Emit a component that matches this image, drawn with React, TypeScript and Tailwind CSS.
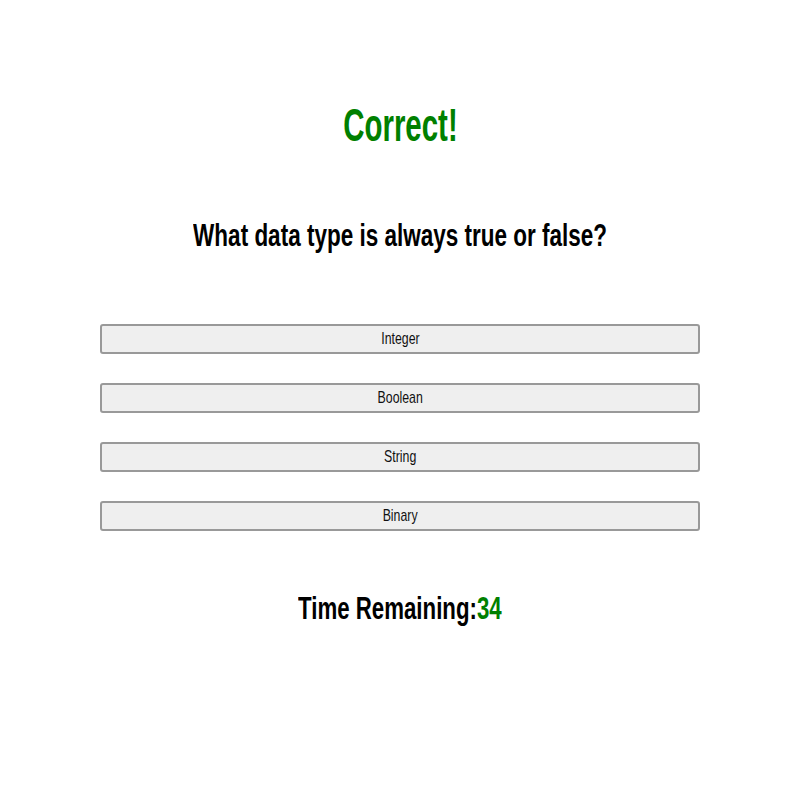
import { useState } from 'react';

const answers = ['Integer', 'Boolean', 'String', 'Binary'];

export default function App() {
  const [timeLeft] = useState(34);

  return (
    <div className="min-h-[800px] bg-white font-['Liberation_Sans',Arial,sans-serif] text-black">
      <div className="w-[600px] mx-auto flex flex-col items-center pt-[98px]">
        {/* Feedback */}
        <h1 className="h-[54px] leading-[54px] text-[46px] font-bold text-[#008000]">
          <span className="inline-block scale-x-[0.64]">Correct!</span>
        </h1>

        {/* Question */}
        <h2 className="mt-[66px] h-[36px] leading-[36px] text-[31px] font-bold whitespace-nowrap">
          <span className="inline-block scale-x-[0.726]">What data type is always true or false?</span>
        </h2>

        {/* Answers */}
        <div className="mt-[70px] w-full flex flex-col gap-[29px]">
          {answers.map((a) => (
            <button
              key={a}
              className="h-[30px] w-full bg-[#efefef] border-2 border-[#999999] rounded-[3px] text-[17px] leading-[26px] text-[#111]"
            >
              <span className="inline-block scale-x-[0.725]">{a}</span>
            </button>
          ))}
        </div>

        {/* Timer */}
        <h2 className="mt-[60px] h-[36px] leading-[36px] text-[31px] font-bold whitespace-nowrap">
          <span className="inline-block scale-x-[0.718]">
            Time Remaining:<span className="text-[#008000]">{timeLeft}</span>
          </span>
        </h2>
      </div>
    </div>
  );
}
